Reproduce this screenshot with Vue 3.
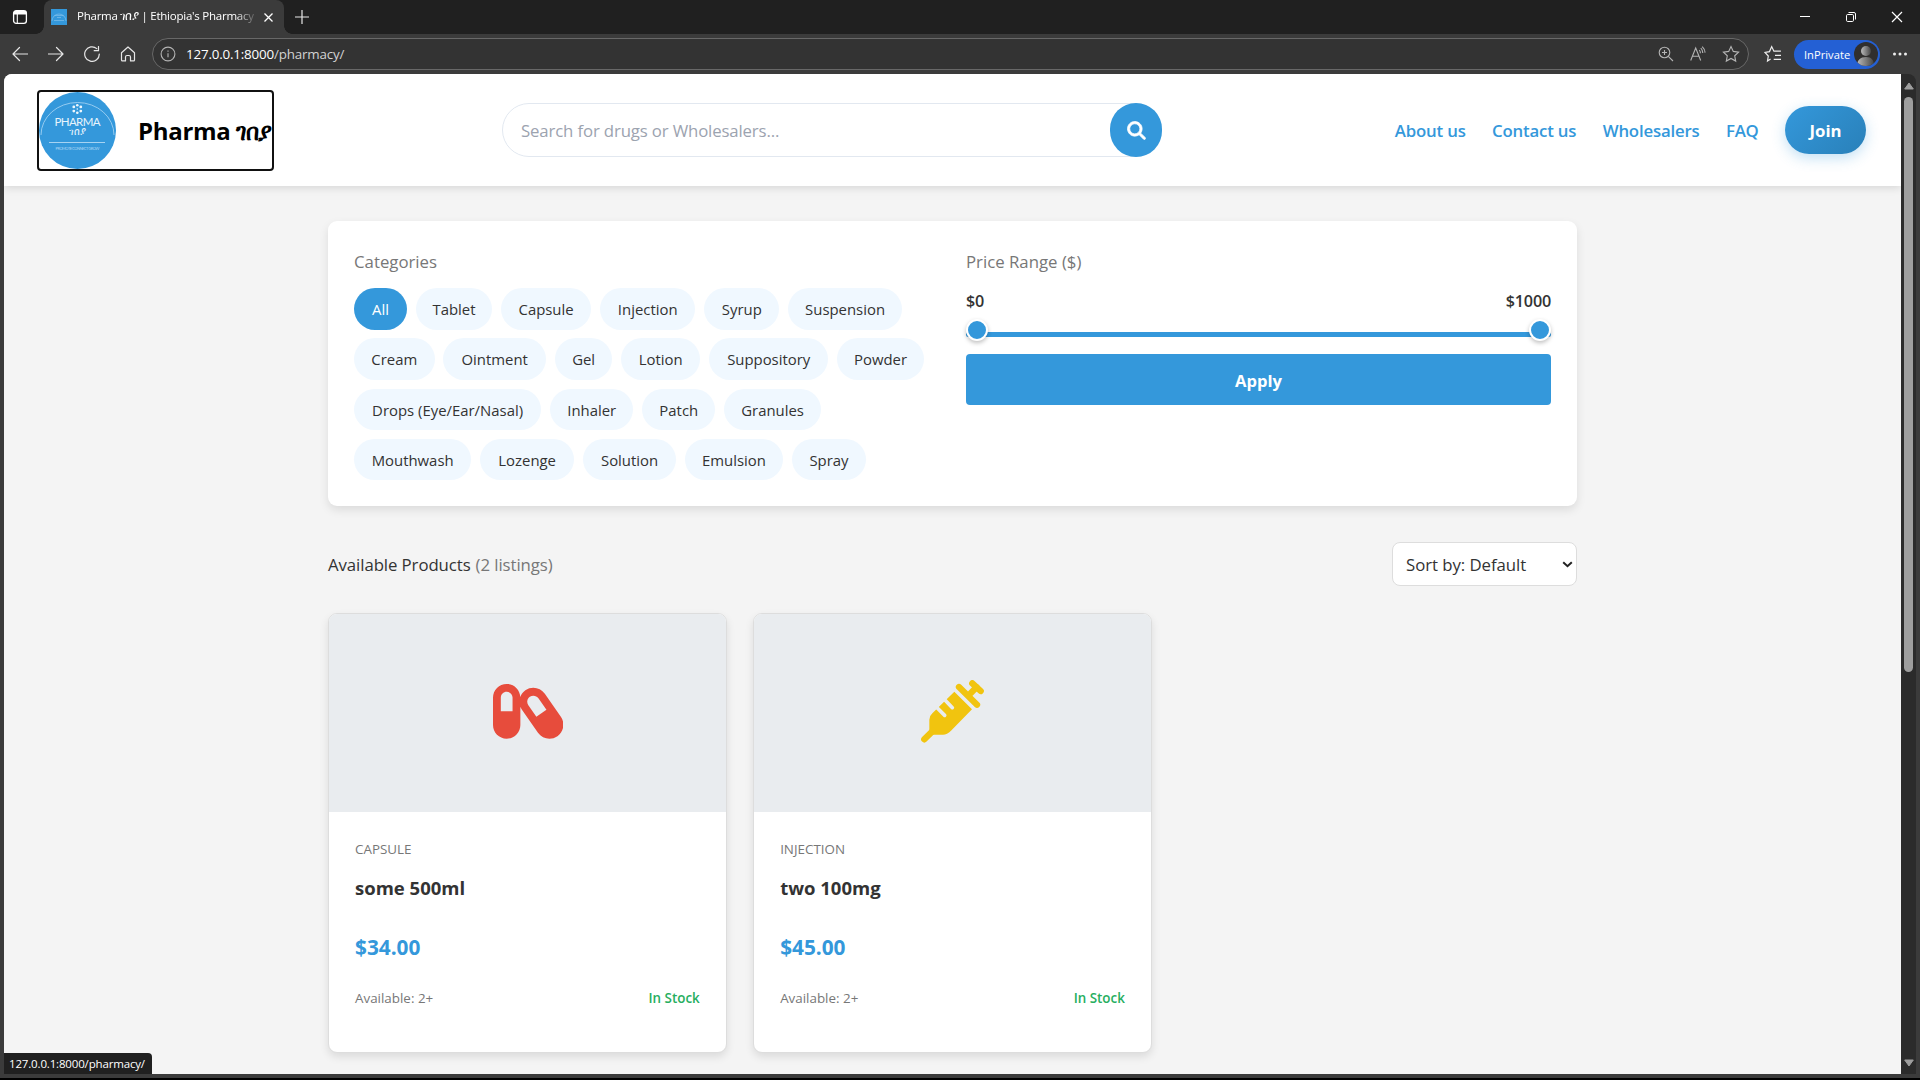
<script setup>
const rows = [
  [['All', 53.1], ['Tablet', 76.2], ['Capsule', 90.4], ['Injection', 95.3], ['Syrup', 75.3], ['Suspension', 113.7]],
  [['Cream', 80.6], ['Ointment', 102.6], ['Gel', 57.7], ['Lotion', 79], ['Suppository', 119.3], ['Powder', 86.8]],
  [['Drops (Eye/Ear/Nasal)', 187.2], ['Inhaler', 83.4], ['Patch', 73.2], ['Granules', 96.8]],
  [['Mouthwash', 117.3], ['Lozenge', 94.1], ['Solution', 93.2], ['Emulsion', 98.1], ['Spray', 74.2]],
]
const products = [
  { kind: 'CAPSULE', name: 'some 500ml', price: '$34.00', icon: 'capsule' },
  { kind: 'INJECTION', name: 'two 100mg', price: '$45.00', icon: 'syringe' },
]
</script>

<template>
  <div class="window">
    <div class="tabstrip">
      <svg class="workspace" width="16" height="16" viewBox="0 0 16 16"><rect x="1.6" y="1.6" width="12.8" height="12.8" rx="2.6" fill="none" stroke="#fff" stroke-width="1.3"/><path d="M2 2h12v3.500H2z" fill="#fff"/><path d="M5.3 5v9" stroke="#fff" stroke-width="1.1"/></svg>
      <div class="tab">
        <svg class="favicon" width="16" height="16" viewBox="0 0 16 16"><path fill="#3498db" d="M0 0h16v16H0z"/><path d="M1 12a7 7 0 0 1 14 0M3.500 6.500h9M6 8.500h4M3 11.500h10" stroke="#8cc6ee" stroke-width=".6" fill="none"/></svg>
        <span class="tab-title">Pharma ገበያ | Ethiopia's Pharmacy</span>
        <svg width="11" height="11" viewBox="0 0 11 11"><path d="M1.500 1.500l8 8m0-8l-8 8" stroke="#fff" stroke-width="1.300"/></svg>
      </div>
      <svg class="plus" width="16" height="16" viewBox="0 0 16 16"><path d="M8 1v14M1 8h14" stroke="#e8e8e8" stroke-width="1.200"/></svg>
      <div class="controls">
        <svg width="12" height="12" viewBox="0 0 12 12"><path d="M1 5.500h10" stroke="#fff"/></svg>
        <svg width="12" height="12" viewBox="0 0 12 12"><rect x="1.500" y="3.500" width="7" height="7" rx="1.200" fill="none" stroke="#fff"/><path d="M3.500 1.500H9A1.500 1.500 0 0 1 10.500 3v5.500" fill="none" stroke="#fff"/></svg>
        <svg width="12" height="12" viewBox="0 0 12 12"><path d="M1 1l10 10m0-10L1 11" stroke="#fff" stroke-width="1.200"/></svg>
      </div>
    </div>

    <div class="toolbar">
      <div class="nav-icons">
        <svg width="16" height="16" viewBox="0 0 16 16"><path d="M7.500 1.500L1 8l6.500 6.500M1 8h14.500"/></svg>
        <svg width="16" height="16" viewBox="0 0 16 16"><path d="M8.500 1.500L15 8l-6.500 6.500M15 8H.5"/></svg>
        <svg width="16" height="16" viewBox="0 0 16 16"><path d="M15.300 8A7.300 7.300 0 1 1 12.800 2.600M14.500.5v4.200h-4.300"/></svg>
        <svg width="16" height="16" viewBox="0 0 16 16"><path d="M1.500 6.800L8 1l6.500 5.800V14a.9.9 0 0 1-.9.9h-3.100V11a1.500 1.500 0 0 0-1.500-1.500H7A1.500 1.500 0 0 0 5.500 11v3.900H2.400a.9.9 0 0 1-.9-.9z"/></svg>
      </div>
      <div class="address">
        <svg class="line" width="16" height="16" viewBox="0 0 16 16"><circle cx="8" cy="8" r="6.900"/><path d="M8 7.300v4M8 4.500v1.300"/></svg>
        <span class="url">127.0.0.1:8000<em>/pharmacy/</em></span>
        <div class="address-actions">
          <svg class="line" width="16" height="16" viewBox="0 0 16 16"><circle cx="6.500" cy="6.500" r="5.300"/><path d="M10.300 10.300l4.700 4.700M6.500 4v5M4 6.500h5"/></svg>
          <svg class="line" width="16" height="16" viewBox="0 0 16 16"><path d="M.7 14.500L5.700 2l5 12.500M2.400 10.200H9M9.300 4a5 5 0 0 1 1.100 3.200M10.800 2a7.500 7.500 0 0 1 2 4.900M12.200.6a9 9 0 0 1 2.900 6"/></svg>
          <svg class="line" width="18" height="18" viewBox="0 0 18 18"><path d="M9 1.500l2.300 4.900 5.300.7-3.900 3.700 1 5.300L9 13.500l-4.700 2.600 1-5.300-3.900-3.700 5.300-.7z"/></svg>
        </div>
      </div>
      <svg class="favs" width="18" height="18" viewBox="0 0 18 18"><path d="M6.600 14L3.500 16l.8-5L1 7.400l4.500-.8L7.700 1.600l2.200 4.600h7M11 10.300h6M9.700 14.300H17" fill="none" stroke="#eee" stroke-width="1.200"/></svg>
      <div class="profile">
        <span>InPrivate</span>
        <svg width="24" height="24" viewBox="0 0 24 24"><defs><linearGradient id="av"><stop offset="0" stop-color="#bbb"/><stop offset="1" stop-color="#444"/></linearGradient><clipPath id="avc"><circle cx="12" cy="12" r="12"/></clipPath></defs><circle cx="12" cy="12" r="12" fill="#302f2e"/><g clip-path="url(#avc)" fill="url(#av)"><circle cx="12" cy="9" r="5"/><path d="M3 24c0-6 3.500-9 9-9s8 3 8 9z"/></g></svg>
      </div>
      <svg class="more" width="16" height="4" viewBox="0 0 16 4" fill="#eee"><circle cx="2.500" cy="2" r="1.500"/><circle cx="8" cy="2" r="1.500"/><circle cx="13.500" cy="2" r="1.500"/></svg>
    </div>

    <div class="viewport">
      <div class="page">
        <header class="header">
          <a class="brand">
            <svg class="logo" width="77" height="77" viewBox="0 0 77 77">
              <circle cx="38.500" cy="38.500" r="38.500" fill="#3498db"/>
              <path d="M2 43a36.500 32.500 0 0 1 73 0" fill="none" stroke="#9fd0f2" stroke-width=".9"/>
              <g fill="#eef7fd"><circle cx="38.300" cy="13.200" r="1.300"/><circle cx="38.300" cy="20.800" r="1.300"/><circle cx="34.800" cy="14.900" r="1.400"/><circle cx="41.800" cy="14.900" r="1.400"/><circle cx="34.800" cy="19.100" r="1.400"/><circle cx="41.800" cy="19.100" r="1.400"/><circle cx="38.300" cy="17" r=".8"/></g>
              <text x="38.500" y="33.500" text-anchor="middle" textLength="46" font-size="11.500" font-family="Lato" fill="#e8f4fc">PHARMA</text>
              <text x="38.500" y="43" text-anchor="middle" textLength="17" font-size="10" fill="#e8f4fc">ገበያ</text>
              <path d="M10 50.500h56" stroke="#c4e2f7" stroke-width=".8"/>
              <text x="38.500" y="58.300" text-anchor="middle" textLength="44" font-size="4" font-family="Lato" fill="#a9d5f4">PROMOTE CONNECT GROW</text>
            </svg>
            <span class="brand-name">Pharma <i>ገበያ</i></span>
          </a>
          <div class="search">
            <span>Search for drugs or Wholesalers...</span>
            <button><svg width="19" height="19" viewBox="-14 -14 540 540" fill="#fff" stroke="#fff" stroke-width="22"><path d="M416 208c0 45.900-14.900 88.300-40 122.700L502.600 457.400c12.500 12.500 12.500 32.800 0 45.300s-32.800 12.500-45.300 0L330.700 376c-34.400 25.200-76.800 40-122.700 40C93.100 416 0 322.900 0 208S93.100 0 208 0S416 93.100 416 208zM208 352a144 144 0 1 0 0-288 144 144 0 1 0 0 288z"/></svg></button>
          </div>
          <nav class="menu"><a>About us</a><a>Contact us</a><a>Wholesalers</a><a>FAQ</a><a class="join">Join</a></nav>
        </header>

        <main class="content">
          <section class="filters">
            <div class="categories">
              <div class="label">Categories</div>
              <div v-for="(row, i) in rows" :key="i" class="chip-row">
                <span v-for="([name, w]) in row" :key="name" class="chip" :class="{ active: name === 'All' }" :style="{ width: w + 'px' }">{{ name }}</span>
              </div>
            </div>
            <div class="price-filter">
              <div class="label">Price Range ($)</div>
              <div class="bounds"><span>$0</span><span>$1000</span></div>
              <div class="slider"><i></i><i></i></div>
              <button class="apply">Apply</button>
            </div>
          </section>

          <div class="list-head">
            <div class="list-title"><span>Available Products</span><small>(2 listings)</small></div>
            <div class="sort"><span>Sort by: Default</span><svg width="11" height="7" viewBox="0 0 11 7"><path d="M1.200 1.200L5.500 5.200l4.300-4" fill="none" stroke="#222" stroke-width="2"/></svg></div>
          </div>

          <div class="grid">
            <article v-for="p in products" :key="p.name" class="card">
              <div class="thumb">
                <svg v-if="p.icon === 'capsule'" width="70.400" height="62.600" viewBox="0 0 576 512" fill="#e74c3c"><path d="M555.300 300.100L424.200 112.800C401.900 81 366.400 64 330.400 64c-22.600 0-45.500 6.700-65.500 20.700-19.700 13.800-33.700 32.800-41.500 53.800C220.500 79.200 172 32 112 32 50.100 32 0 82.100 0 144v224c0 61.900 50.100 112 112 112s112-50.100 112-112V218.900c3.300 8.600 7.300 17.100 12.800 25L368 431.200c22.200 31.800 57.700 48.800 93.800 48.800 22.700 0 45.500-6.700 65.500-20.700 51.700-36.200 64.200-107.500 28-159.200zM160 256H64V144c0-26.500 21.500-48 48-48s48 21.500 48 48v112zm194.800 44.900l-65.600-93.700c-7.700-11-10.700-24.400-8.300-37.600 2.300-13.200 9.700-24.800 20.700-32.500 8.500-6 18.500-9.100 28.800-9.100 16.500 0 31.900 8 41.300 21.500l65.600 93.700-82.500 57.700z"/></svg>
                <svg v-else width="63" height="63" viewBox="544 238 189 189" fill="none" stroke-linecap="round"><path d="M644 273l53 53-63 64q-12 12-24 12h-41v-45q0-11 9-19z" fill="#f1c40f"/><path d="M554 416l26-26M658 259l54 53M698 248l25 23M711 259l-22 23" stroke="#f1c40f" stroke-width="19"/><path d="M590 319l25 25M613 295l25 26" stroke="#e9ecef" stroke-width="11"/></svg>
              </div>
              <div class="info">
                <div class="kind">{{ p.kind }}</div>
                <h3>{{ p.name }}</h3>
                <div class="price">{{ p.price }}</div>
                <div class="stock"><span>Available: 2+</span><b>In Stock</b></div>
              </div>
            </article>
          </div>
        </main>
      </div>
      <div class="scrollbar">
        <svg width="10" height="8" viewBox="0 0 10 8"><path d="M5 1L9.300 7H.7z" fill="#9e9e9e" stroke="#9e9e9e" stroke-linejoin="round"/></svg>
        <i></i>
        <svg class="down" width="10" height="8" viewBox="0 0 10 8"><path d="M5 7L9.300 1H.7z" fill="#9e9e9e" stroke="#9e9e9e" stroke-linejoin="round"/></svg>
      </div>
      <div class="status">127.0.0.1:8000/pharmacy/</div>
    </div>
  </div>
</template>

<style>
body { margin: 0; background: #000; overflow: hidden; }
</style>

<style scoped>
* { box-sizing: border-box; }
svg { display: block; flex: none; }
.window { width: 1920px; height: 1078px; background: #3b3b3b; font-family: "Open Sans", "Noto Sans", sans-serif; color: #333; display: flex; flex-direction: column; overflow: hidden; }
.tabstrip { height: 34px; background: #202020; display: flex; align-items: center; padding-left: 12px; }
.workspace { margin-right: 16px; }
.tab { position: relative; width: 240px; height: 34px; background: #3b3b3b; border-radius: 8px 8px 0 0; display: flex; align-items: center; padding-left: 7px; }
.tab::before, .tab::after { content: ""; position: absolute; bottom: 0; width: 8px; height: 8px; background: radial-gradient(circle at 0 0, #202020 7.500px, #3b3b3b 8px); }
.tab::before { left: -8px; }
.tab::after { right: -8px; background: radial-gradient(circle at 100% 0, #202020 7.500px, #3b3b3b 8px); }
.tab-title { width: 179px; margin: 0 7px 2px 10px; white-space: nowrap; font-size: 11.500px; letter-spacing: -.24px; line-height: 20px; color: #fff; -webkit-mask-image: linear-gradient(90deg, #000 158px, rgba(0, 0, 0, .1) 179px); mask-image: linear-gradient(90deg, #000 158px, rgba(0, 0, 0, .1) 179px); }
.plus { margin-left: 10px; }
.controls { margin-left: auto; display: flex; gap: 34px; padding-right: 17px; }
.toolbar { height: 40px; display: flex; align-items: center; padding-left: 12px; }
.nav-icons { display: flex; gap: 20px; width: 140px; }
.nav-icons svg { fill: none; stroke: #e6e6e6; stroke-width: 1.200; stroke-linecap: round; stroke-linejoin: round; }
.address { width: 1597px; height: 32px; border: 1px solid #686868; border-radius: 16px; background: #333; display: flex; align-items: center; padding-left: 7px; }
.line { fill: none; stroke: #b4b4b4; stroke-width: 1.100; }
.url { margin-left: 10px; font-size: 13.400px; letter-spacing: -.19px; color: #fff; white-space: nowrap; }
.url em { font-style: normal; color: #d2d2d2; }
.address-actions { margin-left: auto; display: flex; align-items: center; gap: 16px; padding-right: 8px; }
.favs { margin-left: 15px; }
.profile { margin-left: 11px; width: 86px; height: 29px; border-radius: 15px; background: #2460d4; display: flex; align-items: center; justify-content: space-between; padding: 0 2px 0 10px; color: #fff; font-size: 11.200px; position: relative; left: 1px; }
.more { margin-left: 13px; }
.viewport { position: relative; height: 1000px; margin: 0 4px; display: flex; }
.page { width: 1897px; height: 1000px; background: #f4f4f4; border-radius: 8px 0 0 0; overflow: hidden; }
.scrollbar { width: 15px; height: 1000px; background: #2b2b2b; border-radius: 0 8px 0 0; display: flex; flex-direction: column; align-items: center; padding: 8px 0 7px; }
.scrollbar i { width: 9px; height: 575px; margin-top: 7px; border-radius: 5px; background: #9e9e9e; }
.down { margin-top: auto; }
.status { position: absolute; left: 0; bottom: 0; width: 148px; height: 21px; background: #202020; border-radius: 0 4px 0 0; color: #fff; font-size: 11.500px; letter-spacing: -.16px; line-height: 21px; padding-left: 5px; white-space: nowrap; }
.header { position: relative; height: 112px; background: #fff; box-shadow: 0 2px 8px rgba(0, 0, 0, .12); display: flex; align-items: center; padding: 0 35px 0 33px; }
.brand { width: 237px; height: 81px; border: 2px solid #111; border-radius: 4px; display: flex; align-items: center; color: #000; }
.brand-name { margin-left: 22px; font-size: 24px; font-weight: 700; letter-spacing: -.3px; white-space: nowrap; }
.brand-name i { font-style: normal; font-size: 23px; letter-spacing: -1.100px; }
.search { margin-left: 228px; width: 660px; height: 54px; border: 1px solid #e2e8f0; border-radius: 27px; display: flex; align-items: center; justify-content: space-between; padding-left: 18px; color: #9ca3af; font-size: 16.800px; letter-spacing: -.15px; }
.search button { border: 0; width: 52px; height: 54px; margin-right: -1px; border-radius: 27px; background: #3498db; display: flex; align-items: center; justify-content: center; padding: 0; }
.menu { margin-left: auto; display: flex; align-items: center; gap: 26.400px; font-size: 16.800px; letter-spacing: -.18px; font-weight: 600; color: #3498db; white-space: nowrap; }
.join { width: 81px; height: 48px; border-radius: 24px; background: linear-gradient(135deg, #3498db, #2980b9); color: #fff; font-weight: 700; letter-spacing: 0; display: flex; align-items: center; justify-content: center; box-shadow: 0 4px 14px rgba(52, 152, 219, .3); }
.content { width: 1249px; margin: 35px 0 0 324px; }
.filters { height: 285px; border-radius: 9px; background: #fff; box-shadow: 0 4px 10px rgba(0, 0, 0, .1); display: flex; padding: 26px; }
.categories { width: 612px; }
.label { height: 41px; line-height: 29px; font-size: 16.800px; color: #777; }
.chip-row { display: flex; gap: 8.800px; height: 50.300px; }
.chip { height: 41.500px; line-height: 42.500px; border-radius: 21px; background: #f0f8ff; text-align: center; font-size: 14.900px; white-space: nowrap; }
.chip.active { background: #3498db; color: #fff; }
.price-filter { width: 585px; }
.bounds { display: flex; justify-content: space-between; height: 44px; line-height: 26px; font-size: 16.200px; font-weight: 600; letter-spacing: -.2px; }
.slider { height: 5px; background: #3498db; border-radius: 3px; display: flex; justify-content: space-between; align-items: center; }
.slider i { width: 22px; height: 22px; border: 2px solid #fff; border-radius: 50%; background: #3498db; box-shadow: 0 2px 4px rgba(0, 0, 0, .25); margin-top: -9px; }
.apply { display: block; width: 100%; height: 51px; margin-top: 17px; border: 0; border-radius: 4px; background: #3498db; color: #fff; font: 700 16.600px "Open Sans", sans-serif; padding: 2px 0 0; }
.list-head { height: 44px; margin: 36px 0 27px; display: flex; align-items: center; justify-content: space-between; font-size: 16.800px; }
.list-title { display: flex; gap: 5px; letter-spacing: -.08px; }
.list-title small { font-size: inherit; color: #777; }
.sort { width: 185px; height: 44px; border: 1px solid #ddd; border-radius: 8px; background: #fff; display: flex; align-items: center; justify-content: space-between; padding: 0 3px 0 13px; letter-spacing: -.06px; }
.grid { display: grid; grid-template-columns: repeat(3, 1fr); gap: 26.400px; }
.card { height: 439.600px; border: 1px solid #ddd; border-radius: 9px; background: #fff; box-shadow: 0 4px 9px rgba(0, 0, 0, .1); overflow: hidden; }
.thumb { height: 198px; background: #e9ecef; display: flex; align-items: center; justify-content: center; padding: 0 0 3px 1px; }
.info { padding: 26px; white-space: nowrap; }
.kind { font-size: 13.400px; line-height: 22px; color: #777; }
h3 { margin: 11px 0 0; font-size: 18.500px; line-height: 34px; font-weight: 700; }
.price { margin-top: 24px; font-size: 20.800px; line-height: 36px; font-weight: 700; color: #3498db; }
.stock { margin-top: 22px; display: flex; justify-content: space-between; font-size: 13.400px; line-height: 22px; color: #777; }
.stock b { font-weight: 600; color: #27ae60; }
</style>
